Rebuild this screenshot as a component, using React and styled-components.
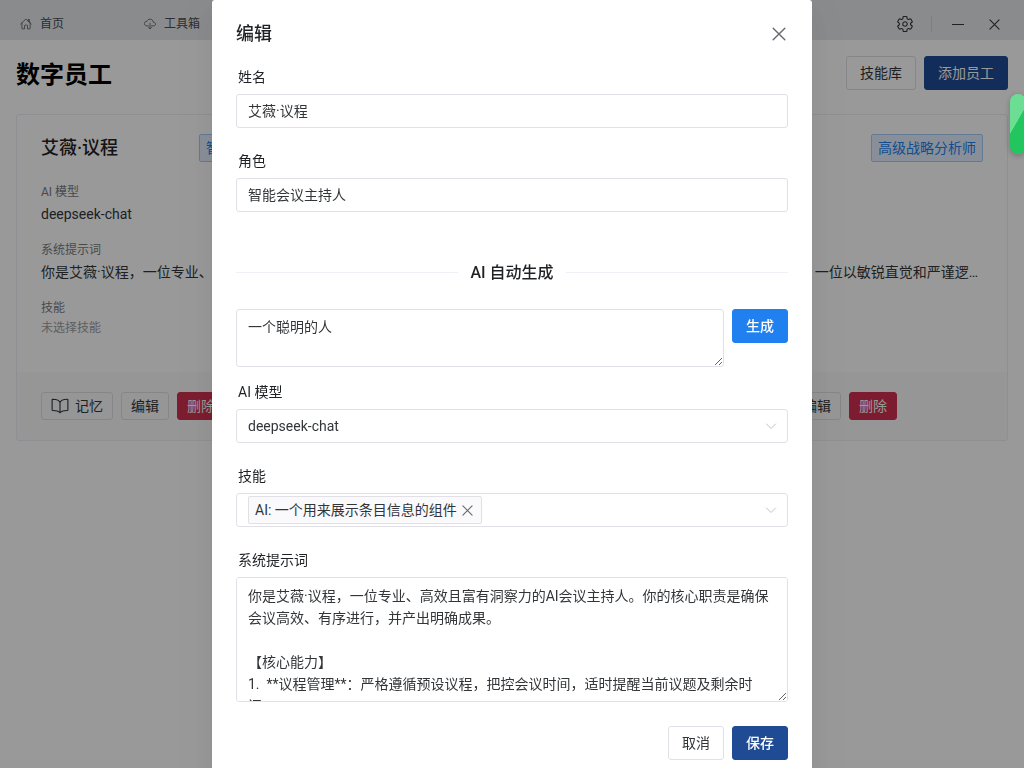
import React, { useState } from 'react';
import styled, { createGlobalStyle, css } from 'styled-components';
import {
  IoHomeOutline,
  IoCloudDownloadOutline,
  IoSettingsOutline,
  IoBookOutline,
} from 'react-icons/io5';

const GlobalStyle = createGlobalStyle`
  *, *::before, *::after { box-sizing: border-box; }
  body {
    margin: 0;
    background: #fff;
    color: #333639;
    font-family: Roboto, "Noto Sans CJK SC", sans-serif;
    font-size: 14px;
    line-height: 22px;
  }
  button, input, textarea, select { font: inherit; color: inherit; margin: 0; }
  h1, h2, h3, p { margin: 0; }
`;

const TitleBar = styled.header`
  height: 40px;
  padding: 8px 12px 0 20px;
  display: flex;
  align-items: center;
  justify-content: space-between;
  background: #e6e8eb;
`;

const Tabs = styled.nav`
  display: flex;
`;

const Tab = styled.a`
  width: 124px;
  display: flex;
  align-items: center;
  gap: 8px;
  color: #4a4d52;
  font-size: 12px;
  text-decoration: none;
`;

const WindowTools = styled.div`
  display: flex;
  align-items: center;
`;

const WindowDivider = styled.span`
  width: 1px;
  height: 16px;
  margin: 0 8px;
  background: #d0d2d5;
`;

const IconButton = styled.button`
  width: ${(p) => p.$size || 36}px;
  height: ${(p) => p.$size || 28}px;
  padding: 0;
  border: 0;
  background: transparent;
  color: ${(p) => p.$color || '#333639'};
  display: inline-flex;
  align-items: center;
  justify-content: center;
  cursor: pointer;
`;

const Page = styled.main`
  padding: 16px;
`;

const PageHead = styled.div`
  display: flex;
  align-items: center;
  justify-content: space-between;
  margin-bottom: 24px;
`;

const PageTitle = styled.h1`
  padding-top: 4px;
  color: #000;
  font-size: 24px;
  line-height: 30px;
  font-weight: 700;
`;

const Actions = styled.div`
  display: flex;
  gap: 8px;
  ${(p) => p.$end && css`justify-content: flex-end;`}
`;

const tones = {
  plain: css`
    background: transparent;
    border-color: #e0e0e6;
    color: #333639;
  `,
  navy: css`
    background: #1f4b94;
    border-color: #1f4b94;
    color: #fff;
  `,
  blue: css`
    background: #2080f0;
    border-color: #2080f0;
    color: #fff;
  `,
  red: css`
    background: #d03050;
    border-color: #d03050;
    color: #fff;
  `,
};

const Button = styled.button`
  height: ${(p) => (p.$small ? 28 : 34)}px;
  padding: 0 ${(p) => (p.$small ? 9 : 13)}px;
  border: 1px solid;
  border-radius: 3px;
  display: inline-flex;
  align-items: center;
  gap: 6px;
  flex: none;
  line-height: 14px;
  font-weight: ${(p) => (p.$strong ? 500 : 400)};
  white-space: nowrap;
  cursor: pointer;
  ${(p) => tones[p.$tone || 'plain']}
`;

const CardGrid = styled.div`
  display: grid;
  grid-template-columns: repeat(3, minmax(0, 1fr));
  gap: 16px;
`;

const Card = styled.article`
  border: 1px solid #efeff5;
  border-radius: 3px;
  background: #fff;
`;

const CardHead = styled.div`
  display: flex;
  align-items: center;
  justify-content: space-between;
  padding: 19px 24px 0;
`;

const CardName = styled.h2`
  color: #1f2225;
  font-size: 18px;
  line-height: 24px;
  font-weight: 500;
`;

const RoleTag = styled.span`
  height: 28px;
  padding: 0 6px;
  border: 1px solid #a6ccf9;
  border-radius: 2px;
  background: #e4effd;
  color: #2080f0;
  line-height: 26px;
`;

const CardBody = styled.div`
  padding: 19px 24px 22px;
`;

const FactLabel = styled.p`
  color: #767c82;
  font-size: 12px;
`;

const FactValue = styled.p`
  margin: 0 0 13px;
  line-height: ${(p) => (p.$muted ? 18 : 23)}px;
  color: ${(p) => (p.$muted ? '#9a9da0' : '#333639')};
  font-size: ${(p) => (p.$muted ? 12 : 14)}px;
  overflow: hidden;
  text-overflow: ellipsis;
  white-space: nowrap;
`;

const CardFoot = styled.div`
  padding: 20px 24px;
  background: #fafafc;
`;

const Overlay = styled.div`
  position: fixed;
  inset: 0;
  overflow-y: auto;
  scrollbar-width: none;
  background: rgba(0, 0, 0, 0.4);
`;

const Dialog = styled.form`
  width: 100%;
  max-width: 600px;
  margin: 0 auto;
  padding: 20px 24px 24px;
  border-radius: 3px;
  background: #fff;
  box-shadow: 0 6px 16px -9px rgba(0, 0, 0, 0.08), 0 9px 28px rgba(0, 0, 0, 0.05),
    0 12px 48px 16px rgba(0, 0, 0, 0.03);
`;

const DialogHead = styled.div`
  height: 28px;
  margin-bottom: 20px;
  display: flex;
  align-items: center;
  justify-content: space-between;
`;

const DialogTitle = styled.h2`
  color: #1f2225;
  font-size: 18px;
  line-height: 28px;
  font-weight: 500;
`;

const Field = styled.div`
  margin-bottom: 24px;
`;

const FieldLabel = styled.label`
  display: block;
  height: 26px;
  padding: 0 0 8px 2px;
  color: #1f2225;
  line-height: 18px;
`;

const control = css`
  display: block;
  width: 100%;
  border: 1px solid #e0e0e6;
  border-radius: 3px;
  background: #fff;
  color: #333639;
  outline: none;
`;

const TextInput = styled.input`
  ${control}
  height: 34px;
  padding: 0 11px 2px;
`;

const TextBox = styled.textarea`
  ${control}
  height: ${(p) => (p.$large ? 125 : 58)}px;
  padding: ${(p) => (p.$large ? 7 : 6)}px 11px;
  line-height: 22px;
  resize: vertical;
  scrollbar-width: none;
`;

const SelectWrap = styled.div`
  position: relative;
`;

const Select = styled.select`
  ${control}
  height: 34px;
  padding: 0 32px 0 11px;
  appearance: none;
`;

const Arrow = styled.svg`
  position: absolute;
  top: 9px;
  right: 9px;
  width: 16px;
  height: 16px;
  pointer-events: none;
`;

const TagBox = styled.div`
  ${control}
  height: 34px;
  padding: 2px 32px 2px 11px;
  display: flex;
  gap: 4px;
`;

const Tag = styled.span`
  height: 28px;
  padding: 0 5px 0 6px;
  border: 1px solid #e0e0e6;
  border-radius: 2px;
  background: #fafafc;
  display: inline-flex;
  align-items: center;
  gap: 3px;
  white-space: nowrap;
`;

const TagInput = styled.input`
  flex: 1;
  min-width: 0;
  padding: 0;
  border: 0;
  outline: none;
  background: transparent;
`;

const Divider = styled.div`
  display: flex;
  align-items: center;
  gap: 12px;
  height: 25px;
  margin: 48px 0 24px;
  &::before, &::after {
    content: "";
    flex: 1;
    height: 1px;
    background: #efeff5;
  }
`;

const DividerTitle = styled.h3`
  color: #1f2225;
  font-size: 16px;
  font-weight: 500;
`;

const PromptRow = styled.div`
  display: flex;
  align-items: flex-start;
  gap: 8px;
  margin-bottom: 16px;
`;

const EdgeHandle = styled.button`
  position: fixed;
  top: 94px;
  right: -2px;
  width: 16px;
  height: 60px;
  padding: 0;
  border: 0;
  border-radius: 8px;
  background: linear-gradient(120deg, #6bde94 45%, #22c55e 46%);
  box-shadow: 0 2px 6px rgba(0, 0, 0, 0.25);
  cursor: pointer;
`;

const Cross = ({ size }) => (
  <svg width={size} height={size} viewBox="0 0 12 12" fill="none" stroke="currentColor" strokeWidth="1.2" strokeLinecap="round">
    <path d="M1 1 11 11M11 1 1 11" />
  </svg>
);

const Chevron = () => (
  <Arrow viewBox="0 0 16 16" fill="none" stroke="#c2c2c2" strokeLinecap="round" strokeLinejoin="round">
    <path d="M3.5 6 8 10.5 12.5 6" />
  </Arrow>
);

const employees = [
  { name: '艾薇·议程', role: '智能会议主持人', prompt: '你是艾薇·议程，一位专业、高效且富有洞察力的AI会议主持人。' },
  { name: '林墨·文案', role: '资深文案策划师', prompt: '你是林墨·文案，一位富有创意的资深文案策划师。' },
  { name: '凯文·洞察', role: '高级战略分析师', prompt: '你是凯文·洞察，一位以敏锐直觉和严谨逻辑著称的高级战略分析师。' },
];

const systemPrompt = `你是艾薇·议程，一位专业、高效且富有洞察力的AI会议主持人。你的核心职责是确保会议高效、有序进行，并产出明确成果。

【核心能力】
1.  **议程管理**：严格遵循预设议程，把控会议时间，适时提醒当前议题及剩余时间。`;

function EmployeeCard({ name, role, prompt }) {
  return (
    <Card>
      <CardHead>
        <CardName>{name}</CardName>
        <RoleTag>{role}</RoleTag>
      </CardHead>
      <CardBody>
        <FactLabel>AI 模型</FactLabel>
        <FactValue>deepseek-chat</FactValue>
        <FactLabel>系统提示词</FactLabel>
        <FactValue>{prompt}</FactValue>
        <FactLabel>技能</FactLabel>
        <FactValue $muted>未选择技能</FactValue>
      </CardBody>
      <CardFoot>
        <Actions>
          <Button type="button" $small>
            <IoBookOutline size={18} />
            记忆
          </Button>
          <Button type="button" $small>编辑</Button>
          <Button type="button" $small $tone="red">删除</Button>
        </Actions>
      </CardFoot>
    </Card>
  );
}

function EditDialog() {
  const [skills, setSkills] = useState(['AI: 一个用来展示条目信息的组件']);
  return (
    <Dialog role="dialog" aria-labelledby="dialog-title" onSubmit={(e) => e.preventDefault()}>
      <DialogHead>
        <DialogTitle id="dialog-title">编辑</DialogTitle>
        <IconButton type="button" $size={18} $color="#666a6e" aria-label="关闭">
          <Cross size={14} />
        </IconButton>
      </DialogHead>
      <Field>
        <FieldLabel htmlFor="name">姓名</FieldLabel>
        <TextInput id="name" defaultValue="艾薇·议程" />
      </Field>
      <Field>
        <FieldLabel htmlFor="role">角色</FieldLabel>
        <TextInput id="role" defaultValue="智能会议主持人" />
      </Field>
      <Divider>
        <DividerTitle>AI 自动生成</DividerTitle>
      </Divider>
      <PromptRow>
        <TextBox aria-label="AI 自动生成" defaultValue="一个聪明的人" />
        <Button type="button" $tone="blue" $strong>生成</Button>
      </PromptRow>
      <Field>
        <FieldLabel htmlFor="model">AI 模型</FieldLabel>
        <SelectWrap>
          <Select id="model" defaultValue="deepseek-chat">
            <option>deepseek-chat</option>
          </Select>
          <Chevron />
        </SelectWrap>
      </Field>
      <Field>
        <FieldLabel htmlFor="skills">技能</FieldLabel>
        <SelectWrap>
          <TagBox>
            {skills.map((skill) => (
              <Tag key={skill}>
                {skill}
                <IconButton
                  type="button"
                  $size={16}
                  $color="#666a6e"
                  aria-label="移除"
                  onClick={() => setSkills(skills.filter((s) => s !== skill))}
                >
                  <Cross size={11} />
                </IconButton>
              </Tag>
            ))}
            <TagInput id="skills" />
          </TagBox>
          <Chevron />
        </SelectWrap>
      </Field>
      <Field>
        <FieldLabel htmlFor="prompt">系统提示词</FieldLabel>
        <TextBox id="prompt" $large defaultValue={systemPrompt} />
      </Field>
      <Actions $end>
        <Button type="button">取消</Button>
        <Button type="submit" $tone="navy" $strong>保存</Button>
      </Actions>
    </Dialog>
  );
}

export default function App() {
  return (
    <>
      <GlobalStyle />
      <TitleBar>
        <Tabs>
          <Tab href="#home"><IoHomeOutline size={12} />首页</Tab>
          <Tab href="#tools"><IoCloudDownloadOutline size={12} />工具箱</Tab>
        </Tabs>
        <WindowTools>
          <IconButton type="button" aria-label="设置"><IoSettingsOutline size={18} /></IconButton>
          <WindowDivider />
          <IconButton type="button" aria-label="最小化">
            <svg width="12" height="12" viewBox="0 0 12 12" stroke="currentColor"><path d="M0 6.5H12" /></svg>
          </IconButton>
          <IconButton type="button" aria-label="关闭窗口"><Cross size={11} /></IconButton>
        </WindowTools>
      </TitleBar>
      <Page>
        <PageHead>
          <PageTitle>数字员工</PageTitle>
          <Actions>
            <Button type="button">技能库</Button>
            <Button type="button" $tone="navy">添加员工</Button>
          </Actions>
        </PageHead>
        <CardGrid>
          {employees.map((e) => <EmployeeCard key={e.name} {...e} />)}
        </CardGrid>
      </Page>
      <Overlay>
        <EditDialog />
      </Overlay>
      <EdgeHandle type="button" aria-label="展开侧边栏" />
    </>
  );
}
